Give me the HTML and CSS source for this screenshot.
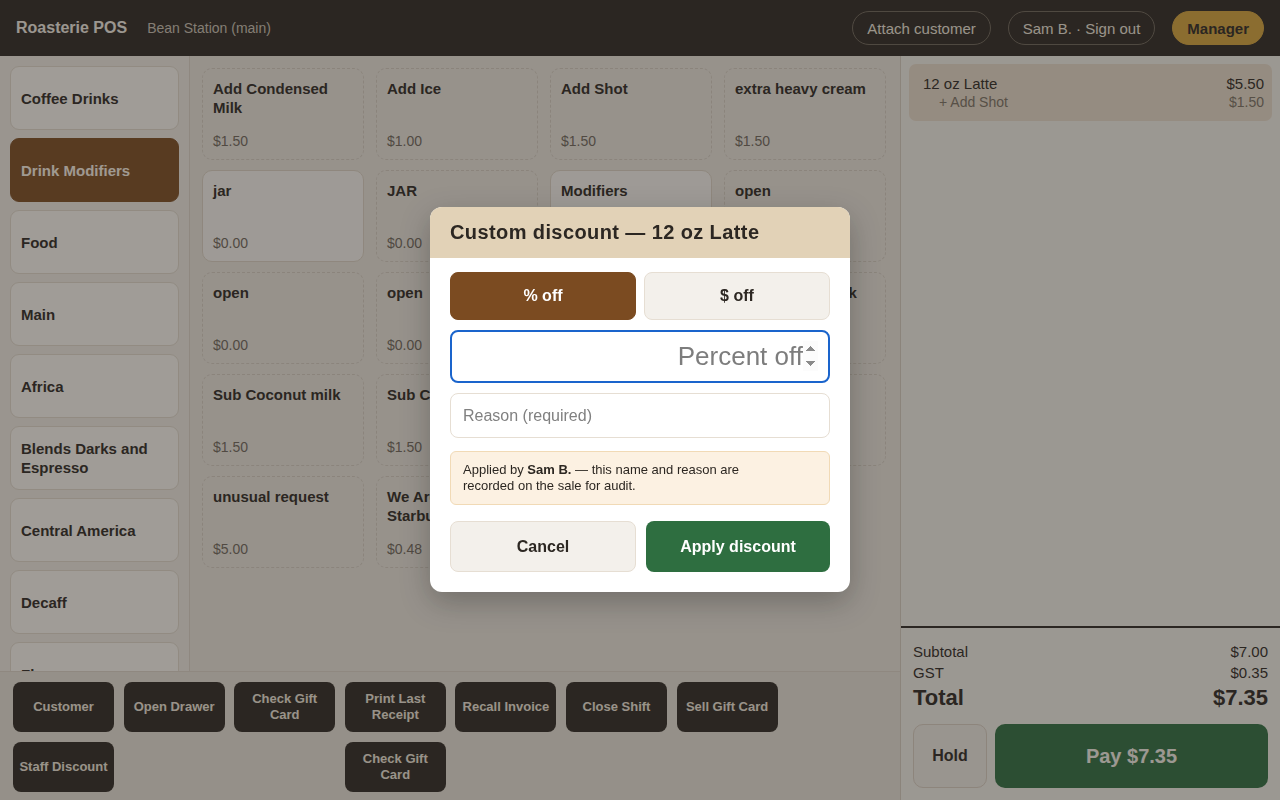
FILE: index.html
```html
<!DOCTYPE html>
<html lang="en">
<head>
    <meta charset="UTF-8">
    <meta name="viewport" content="width=device-width, initial-scale=1.0">
    <title>Roasterie POS</title>
    <link rel="stylesheet" href="styles.css">
</head>
<body>
    <header class="topbar">
        <div class="brand">
            <span class="brand-name">Roasterie POS</span>
            <span class="brand-store">Bean Station (main)</span>
        </div>
        <div class="top-actions">
            <button class="pill">Attach customer</button>
            <button class="pill">Sam B. · Sign out</button>
            <button class="pill manager">Manager</button>
        </div>
    </header>

    <div class="layout">
        <div class="left">
            <div class="catalog">
                <aside class="categories">
                    <button class="cat">Coffee Drinks</button>
                    <button class="cat active">Drink Modifiers</button>
                    <button class="cat">Food</button>
                    <button class="cat">Main</button>
                    <button class="cat">Africa</button>
                    <button class="cat">Blends Darks and Espresso</button>
                    <button class="cat">Central America</button>
                    <button class="cat">Decaff</button>
                    <button class="cat">Flavours</button>
                </aside>

                <section class="products">
                    <div class="item"><b>Add Condensed Milk</b><span>$1.50</span></div>
                    <div class="item"><b>Add Ice</b><span>$1.00</span></div>
                    <div class="item"><b>Add Shot</b><span>$1.50</span></div>
                    <div class="item"><b>extra heavy cream</b><span>$1.50</span></div>

                    <div class="item solid"><b>jar</b><span>$0.00</span></div>
                    <div class="item"><b>JAR</b><span>$0.00</span></div>
                    <div class="item solid"><b>Modifiers</b><span>$0.00</span></div>
                    <div class="item"><b>open</b><span>$0.00</span></div>

                    <div class="item"><b>open</b><span>$0.00</span></div>
                    <div class="item"><b>open</b><span>$0.00</span></div>
                    <div class="item"><b>open</b><span>$0.00</span></div>
                    <div class="item"><b>Sub Almond milk</b><span>$1.50</span></div>

                    <div class="item"><b>Sub Coconut milk</b><span>$1.50</span></div>
                    <div class="item"><b>Sub Cashew milk</b><span>$1.50</span></div>
                    <div class="item"><b>Sub Oat milk</b><span>$1.50</span></div>
                    <div class="item"><b>Sub Soy milk</b><span>$1.50</span></div>

                    <div class="item"><b>unusual request</b><span>$5.00</span></div>
                    <div class="item"><b>We Are Not Starbucks</b><span>$0.48</span></div>
                </section>
            </div>

            <!-- quick actions -->
            <footer class="actions">
                <button class="act">Customer</button>
                <button class="act">Open Drawer</button>
                <button class="act">Check Gift Card</button>
                <button class="act">Print Last Receipt</button>
                <button class="act">Recall Invoice</button>
                <button class="act">Close Shift</button>
                <button class="act">Sell Gift Card</button>
                <button class="act">Staff Discount</button>
                <button class="act col4">Check Gift Card</button>
            </footer>
        </div>

        <aside class="ticket">
            <div class="lines">
                <div class="line">
                    <div class="line-row"><span>12 oz Latte</span><span>$5.50</span></div>
                    <div class="line-row mod"><span>+ Add Shot</span><span>$1.50</span></div>
                </div>
            </div>
            <div class="totals">
                <div class="trow"><span>Subtotal</span><span>$7.00</span></div>
                <div class="trow"><span>GST</span><span>$0.35</span></div>
                <div class="trow total"><span>Total</span><span>$7.35</span></div>
                <div class="pay-row">
                    <button class="hold">Hold</button>
                    <button class="pay">Pay $7.35</button>
                </div>
            </div>
        </aside>
    </div>

    <div class="backdrop">
        <div class="modal">
            <div class="modal-head">Custom discount — 12 oz Latte</div>
            <div class="modal-body">
                <div class="toggle">
                    <button class="tog on">% off</button>
                    <button class="tog">$ off</button>
                </div>
                <input class="amount" type="number" placeholder="Percent off" autofocus>
                <input class="reason" type="text" placeholder="Reason (required)">
                <div class="note">Applied by <b>Sam B.</b> — this name and reason are recorded on the sale for audit.</div>
                <div class="modal-btns">
                    <button class="cancel">Cancel</button>
                    <button class="apply">Apply discount</button>
                </div>
            </div>
        </div>
    </div>
</body>
</html>
```

FILE: styles.css
```css
*{
    margin: 0;
    padding: 0;
    box-sizing: border-box;
}
body{
    font-family: "Liberation Sans", Arial, sans-serif;
    color: #2c2722;
    background-color: #f0ece5;
    width: 1280px;
    height: 800px;
    overflow: hidden;
}
button{
    font-family: inherit;
    cursor: pointer;
}

/* top bar */
.topbar{
    height: 56px;
    background-color: #2c2722;
    display: flex;
    align-items: center;
    justify-content: space-between;
    padding: 0 16px;
}
.brand{
    display: flex;
    align-items: baseline;
    gap: 20px;
}
.brand-name{
    color: #f3eee6;
    font-weight: bold;
    font-size: 16px;
}
.brand-store{
    color: #c9c1b5;
    font-size: 14px;
}
.top-actions{
    display: flex;
    gap: 17px;
}
.pill{
    height: 34px;
    padding: 0 14px;
    border-radius: 17px;
    border: 1px solid #6c645a;
    background: transparent;
    color: #efe8de;
    font-size: 15px;
}
.manager{
    background-color: #d6a43c;
    border-color: #d6a43c;
    color: #2c2722;
    font-weight: bold;
}

/* main layout */
.layout{
    display: flex;
    height: 744px;
}
.left{
    width: 900px;
    display: flex;
    flex-direction: column;
}
.catalog{
    flex: 1;
    display: flex;
    min-height: 0;
}
.categories{
    width: 190px;
    padding: 10px 10px 0 10px;
    border-right: 1px solid #ddd5ca;
    display: flex;
    flex-direction: column;
    gap: 8px;
    overflow: hidden;
}
.cat{
    flex: none;
    height: 64px;
    width: 169px;
    text-align: left;
    padding: 0 10px;
    border-radius: 9px;
    border: 1px solid #e2d9cd;
    background-color: #fbf8f3;
    color: #2c2722;
    font-weight: bold;
    font-size: 15px;
    line-height: 19px;
}
.cat.active{
    background-color: #7b4b21;
    border-color: #7b4b21;
    color: #fbf3e8;
}
.products{
    flex: 1;
    padding: 12px;
    display: grid;
    grid-template-columns: repeat(4, 162px);
    grid-auto-rows: 92px;
    column-gap: 12px;
    row-gap: 10px;
    align-content: start;
    background-color: #ebe6de;
}
.item{
    border: 1px dashed #d6cec3;
    border-radius: 10px;
    padding: 10px 10px 10px 10px;
    display: flex;
    flex-direction: column;
    justify-content: space-between;
}
.item.solid{
    border: 1px solid #ddd3c6;
    background-color: #f8f5f0;
}
.item b{
    font-size: 15px;
    line-height: 19px;
}
.item span{
    font-size: 14px;
    color: #6f665c;
}

/* quick actions */
.actions{
    height: 129px;
    border-top: 1px solid #ddd5ca;
    background-color: #e8e2d9;
    padding: 10px 13px;
    display: grid;
    grid-template-columns: repeat(7, 101px);
    grid-auto-rows: 50px;
    column-gap: 9.6px;
    row-gap: 10px;
}
.act{
    border: none;
    border-radius: 8px;
    background-color: #2c2722;
    color: #efe7dc;
    font-weight: bold;
    font-size: 13px;
    line-height: 16px;
    padding: 0 6px;
}
.col4{
    grid-column: 4;
}

/* ticket */
.ticket{
    width: 380px;
    border-left: 1px solid #d6cdc1;
    background-color: #f3f0ea;
    display: flex;
    flex-direction: column;
}
.lines{
    flex: 1;
    padding: 8px;
}
.line{
    background-color: #e8dccb;
    border-radius: 7px;
    padding: 10px 8px 10px 14px;
}
.line-row{
    display: flex;
    justify-content: space-between;
    font-size: 15px;
    line-height: 19px;
}
.line-row.mod{
    font-size: 14px;
    line-height: 18px;
    color: #7a7064;
    padding-left: 16px;
}
.totals{
    border-top: 2px solid #2c2722;
    padding: 13px 12px 12px 12px;
}
.trow{
    display: flex;
    justify-content: space-between;
    font-size: 15px;
    line-height: 21px;
}
.trow.total{
    font-size: 22px;
    font-weight: bold;
    line-height: 30px;
    margin-bottom: 11px;
}
.pay-row{
    display: flex;
    gap: 8px;
}
.hold{
    width: 74px;
    height: 64px;
    border-radius: 10px;
    border: 1px solid #d9cfc2;
    background-color: #efebe5;
    color: #2c2722;
    font-weight: bold;
    font-size: 16px;
}
.pay{
    flex: 1;
    height: 64px;
    border-radius: 10px;
    border: none;
    background-color: #2e6e40;
    color: #f5f1ea;
    font-weight: bold;
    font-size: 20px;
}

/* modal */
.backdrop{
    position: fixed;
    inset: 0;
    background-color: rgba(44, 39, 34, 0.44);
    display: flex;
    justify-content: center;
    align-items: flex-start;
    padding-top: 207px;
}
.modal{
    width: 420px;
    background-color: #ffffff;
    border-radius: 12px;
    overflow: hidden;
    box-shadow: 0 10px 30px rgba(0, 0, 0, 0.25);
}
.modal-head{
    height: 51px;
    background-color: #e2d2b7;
    padding: 0 20px;
    display: flex;
    align-items: center;
    font-size: 20px;
    letter-spacing: 0.4px;
    font-weight: bold;
    color: #2c2722;
}
.modal-body{
    padding: 14px 20px 20px 20px;
    display: flex;
    flex-direction: column;
}
.toggle{
    display: flex;
    gap: 8px;
}
.tog{
    flex: 1;
    height: 48px;
    border-radius: 8px;
    border: 1px solid #e6ded3;
    background-color: #f3f0eb;
    color: #2c2722;
    font-weight: bold;
    font-size: 16px;
}
.tog.on{
    background-color: #7b4b21;
    border-color: #7b4b21;
    color: #ffffff;
}
.amount{
    margin-top: 10px;
    height: 53px;
    border: 2px solid #1a64cc;
    border-radius: 8px;
    outline: none;
    text-align: right;
    padding: 0 10px;
    font-family: inherit;
    font-size: 26px;
    color: #2c2722;
}
.amount::placeholder{
    color: #7d7d7d;
}
.reason{
    margin-top: 10px;
    height: 45px;
    border: 1px solid #e6ded3;
    border-radius: 8px;
    outline: none;
    padding: 0 12px;
    font-family: inherit;
    font-size: 16px;
}
.reason::placeholder{
    color: #808080;
}
.note{
    margin-top: 13px;
    background-color: #fcf1e2;
    border: 1px solid #f1dab6;
    border-radius: 6px;
    padding: 10px 56px 10px 12px;
    font-size: 13px;
    line-height: 16px;
    color: #2c2722;
}
.modal-btns{
    margin-top: 16px;
    display: flex;
    gap: 10px;
}
.cancel, .apply{
    flex: 1;
    height: 51px;
    border-radius: 8px;
    font-weight: bold;
    font-size: 16px;
}
.cancel{
    background-color: #f3f0eb;
    border: 1px solid #e6ded3;
    color: #2c2722;
}
.apply{
    background-color: #2e6e40;
    border: none;
    color: #ffffff;
}
```
